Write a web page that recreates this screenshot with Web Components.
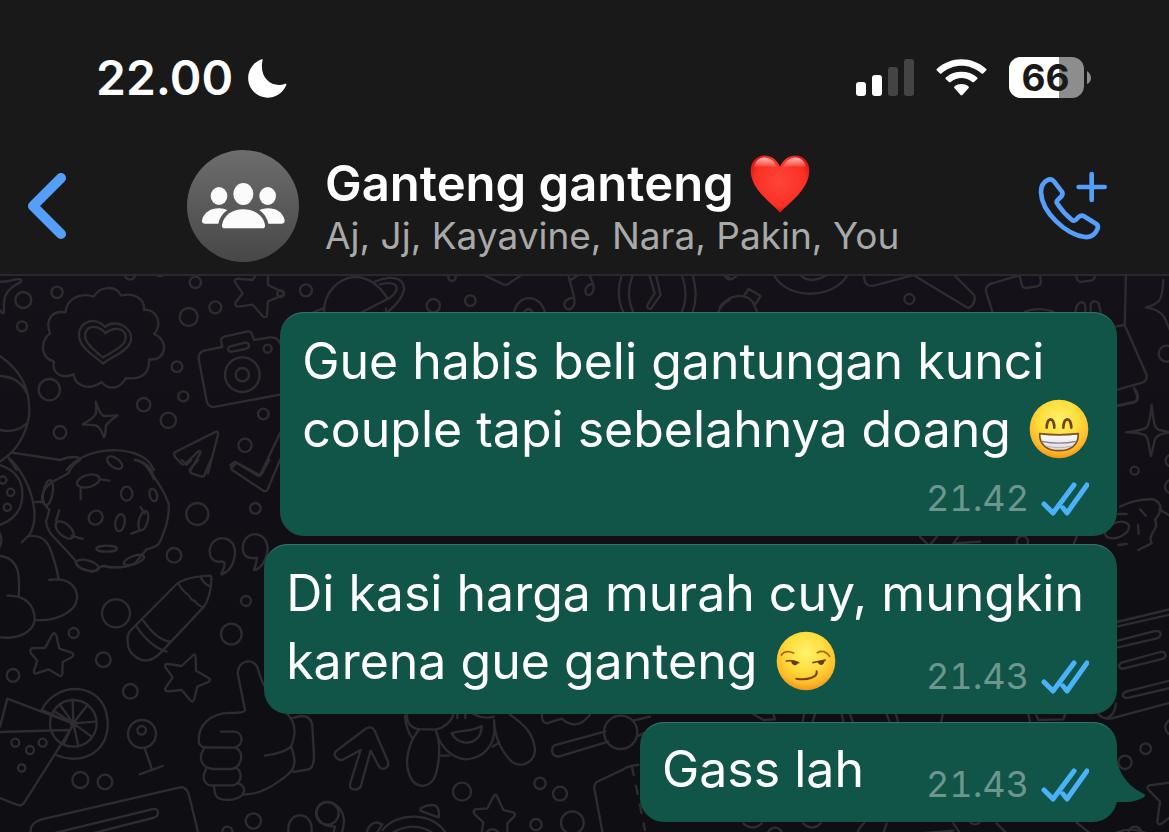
<!DOCTYPE html>
<html lang="id">
<head>
<meta charset="utf-8">
<meta name="viewport" content="width=device-width, initial-scale=1">
<title>Ganteng ganteng</title>
<style>
  html, body { margin: 0; height: 100%; background: #0f0e13; }
  body { font-family: Inter, "Liberation Sans", sans-serif; color: #fff; }
</style>
</head>
<body>
<chat-screen>
  <status-bar slot="top" time="22.00" battery="66"></status-bar>
  <chat-header slot="top">
    <span slot="name">Ganteng ganteng</span>
    <emoji-icon slot="mark" name="heart"></emoji-icon>
    <span slot="members">Aj, Jj, Kayavine, Nara, Pakin, You</span>
  </chat-header>
  <message-bubble layout="stack" time="21.42">Gue habis beli gantungan kunci<br>couple tapi sebelahnya doang <emoji-icon name="grin"></emoji-icon></message-bubble>
  <message-bubble layout="overlay" time="21.43">Di kasi harga murah cuy, mungkin<br>karena gue ganteng <emoji-icon name="smirk"></emoji-icon></message-bubble>
  <message-bubble layout="row" time="21.43" tail>Gass lah</message-bubble>
</chat-screen>

<script>
const define = (name, render) => customElements.define(name, class extends HTMLElement {
  connectedCallback() {
    if (this.shadowRoot) return;
    this.attachShadow({ mode: 'open' }).innerHTML = render(this);
  }
});

define('chat-screen', () => `
<style>
  :host { display: flex; flex-direction: column; height: 100vh; overflow: hidden; }
  header { background: #191919; border-bottom: 2px solid #29282b; flex: none; }
  main { flex: 1; position: relative; overflow: hidden; }
  chat-wallpaper { position: absolute; inset: 0; }
  .thread { position: relative; display: flex; flex-direction: column; align-items: flex-end; gap: 8px; padding: 36px 52px 8px; }
</style>
<header><slot name="top"></slot></header>
<main><chat-wallpaper></chat-wallpaper><div class="thread"><slot></slot></div></main>`);

define('status-bar', el => `
<style>
  :host { display: flex; align-items: center; justify-content: space-between; height: 64px; padding: 46px 78px 40px 96px; }
  div { display: flex; align-items: center; }
  .left { gap: 14px; }
  .right { gap: 22px; }
  time { font-size: 48px; line-height: 64px; font-weight: 600; }
  svg { display: block; }
  .battery { display: grid; align-items: center; }
  .battery > * { grid-area: 1 / 1; }
  .battery b { width: 73px; text-align: center; color: #191919; font-size: 37px; line-height: 42px; font-weight: 700; }
</style>
<div class="left"><time>${el.getAttribute('time')}</time>
  <svg width="40" height="42" viewBox="0 -6 120 126" role="img" aria-label="Focus"><path fill="#fff" d="M47 2C48 1 47 0 44 1A59 59 0 1 0 118 77C119 74 117 73 115 74C83 88 40 65 45 14Q46 6 47 2Z"/></svg>
</div>
<div class="right">
  <svg width="58" height="38" viewBox="0 0 58 38" role="img" aria-label="Signal"><g fill="#fff"><rect y="23" width="10" height="14" rx="3"/><rect x="16" y="16" width="10" height="21" rx="3"/></g><g fill="#444"><rect x="32" y="8" width="10" height="29" rx="3"/><rect x="48" width="10" height="37" rx="3"/></g></svg>
  <svg width="51" height="38" viewBox="0 0 153 114" role="img" aria-label="Wi-Fi"><g fill="#fff"><path d="M2 34Q0 31 3 29C45-9 108-9 150 29Q153 31 151 34L142 43Q139 46 136 43C101 13 52 13 17 43Q14 46 11 43Z"/><path d="M29 60Q27 57 30 55C56 33 97 33 123 55Q126 57 124 60L114 69Q112 71 109 69C89 53 64 53 44 69Q41 71 39 69Z"/><path d="M55 87Q53 85 56 82C67 73 86 73 97 82Q100 85 98 87L80 107Q76 111 73 107Z"/></g></svg>
  <div class="battery">
    <svg width="82" height="42" viewBox="0 0 82 42" aria-hidden="true"><defs><clipPath id="c"><rect width="75" height="41" rx="12"/></clipPath></defs><g clip-path="url(#c)"><rect width="75" height="42" fill="#8d8d8d"/><rect width="50" height="42" fill="#fff"/></g><path d="M78 14Q82 17 82 21T78 27Z" fill="#8d8d8d"/></svg>
    <b>${el.getAttribute('battery')}</b>
  </div>
</div>`);

define('chat-header', () => `
<style>
  :host { display: flex; align-items: center; height: 112px; padding: 0 61px 12px 24px; }
  button { border: 0; padding: 0; background: none; cursor: pointer; display: block; }
  svg { display: block; }
  .back { margin-right: 117px; }
  .avatar { width: 112px; height: 112px; border-radius: 50%; background: linear-gradient(#6d6d6d, #474747); flex: none; }
  .title { flex: 1; min-width: 0; padding-left: 26px; }
  h1 { margin: 0; display: flex; align-items: center; gap: 16px; font-size: 49px; line-height: 60px; font-weight: 600; }
  p { margin: 0; font-size: 37px; line-height: 44px; color: #a9a9a9; white-space: nowrap; }
</style>
<button class="back" aria-label="Back"><svg width="46" height="72" viewBox="0 0 46 72"><path d="M37 8L9 36L37 64" fill="none" stroke="#559ffb" stroke-width="10" stroke-linecap="round" stroke-linejoin="round"/></svg></button>
<div class="avatar"><svg width="112" height="112" viewBox="561 29 336 336" role="img" aria-label="Group"><g fill="#fbfbfb"><ellipse cx="730" cy="161" rx="30" ry="33"/><ellipse cx="657" cy="167" rx="25" ry="27"/><ellipse cx="803" cy="167" rx="25" ry="27"/><path d="M674 264Q665 264 666 254C671 224 699 207 730 207S790 224 795 254Q796 264 787 264Z"/><path d="M614 250Q605 250 606 240C612 214 636 203 658 204Q671 204 682 209Q660 225 655 250Z"/><path d="M846 250Q855 250 854 240C849 214 825 203 803 204Q790 204 778 209Q800 225 805 250Z"/></g></svg></div>
<div class="title"><h1><slot name="name"></slot><slot name="mark"></slot></h1><p><slot name="members"></slot></p></div>
<button aria-label="Start call"><svg width="70" height="70" viewBox="895 93 210 210"><g fill="none" stroke="#559ffb" stroke-width="14" stroke-linecap="round" stroke-linejoin="round"><path d="M1056 102V180M1017 141H1095"/><path d="M943 124L966 154Q971 161 966 168L953 181Q949 186 953 191Q970 217 996 239Q1003 245 1009 239L1018 230Q1025 224 1033 229L1069 251Q1077 257 1074 266Q1062 294 1036 291C980 285 906 217 904 157Q904 130 922 121Q935 114 943 124Z"/></g></svg></button>`);

define('message-bubble', el => `
<style>
  :host { display: grid; row-gap: 6px; position: relative; box-sizing: border-box; max-width: 100%; padding: 15px 28px 14px 22px; border-radius: 24px; background: #115448; box-shadow: inset 0 2px 1px -1px #38766b; }
  .text { font-size: 50px; line-height: 68px; margin-bottom: 5px; }
  .meta { display: flex; align-items: center; justify-content: flex-end; gap: 12px; align-self: end; }
  time { font-size: 36px; line-height: 48px; color: #6c968e; font-variant-numeric: tabular-nums; }
  :host([layout="overlay"]) .text, :host([layout="overlay"]) .meta { grid-area: 1 / 1; }
  :host([layout="overlay"]) .text { padding-right: 5px; }
  :host([layout="row"]) { grid-auto-flow: column; column-gap: 62px; padding-top: 13px; }
  .tail { position: absolute; right: -29px; bottom: 12px; }
</style>
${el.hasAttribute('tail') ? '<svg class="tail" width="45" height="50" viewBox="0 0 45 50" aria-hidden="true"><path fill="#115448" d="M0 0H16C19 17 30 28 43 34Q45 35 43 37C33 43 25 42 16 42L0 50Z"/></svg>' : ''}
<div class="text"><slot></slot></div>
<div class="meta"><time>${el.getAttribute('time')}</time>
  <svg width="48" height="36" viewBox="1041 480 48 36" role="img" aria-label="Read"><path d="M1044 504L1053 513L1074 485M1063 508L1067 513L1087 485" fill="none" stroke="#4bb1f8" stroke-width="5" stroke-linecap="round" stroke-linejoin="round"/></svg>
</div>`);

const face = `<radialGradient id="f" cx=".5" cy=".35" r=".68"><stop offset="0" stop-color="#fff36a"/><stop offset=".5" stop-color="#ffdc3c"/><stop offset=".8" stop-color="#fdb92a"/><stop offset="1" stop-color="#ee8b14"/></radialGradient>`;
const emoji = {
  heart: ['❤️', `<defs><radialGradient id="h" cx=".5" cy=".45" r=".62"><stop offset="0" stop-color="#ff4438"/><stop offset=".7" stop-color="#fb3024"/><stop offset="1" stop-color="#c80a06"/></radialGradient><linearGradient id="g" x2="0" y2="1"><stop stop-color="#fff" stop-opacity=".7"/><stop offset="1" stop-color="#fff" stop-opacity="0"/></linearGradient></defs><path fill="url(#h)" d="M90 176C72 153 2 108 2 50C2-3 68-14 90 38C112-14 178-3 178 50C178 108 108 153 90 176Z"/><path fill="url(#g)" d="M12 42C16 2 66-2 82 42Q47 32 12 42ZM98 42C114-2 164 2 168 42Q133 32 98 42Z"/>`],
  grin: ['😁', `<defs>${face}<linearGradient id="t" x2="0" y2="1"><stop stop-color="#fff"/><stop offset="1" stop-color="#d9d9df"/></linearGradient></defs><circle cx="90" cy="90" r="88" fill="url(#f)"/><g fill="none" stroke="#75400d" stroke-width="8" stroke-linecap="round"><path d="M53 86Q54 62 65 61Q75 62 76 86M103 86Q104 62 115 61Q126 62 127 86"/></g><path d="M32 104Q90 111 148 104C149 137 126 155 90 155S31 137 32 104Z" fill="url(#t)" stroke="#81501d" stroke-width="5" stroke-linejoin="round"/><path d="M38 127Q90 138 142 127" fill="none" stroke="#8d7f86" stroke-width="4"/><path d="M50 141Q90 151 130 141" fill="none" stroke="#b9b0b6" stroke-width="3"/>`],
  smirk: ['😏', `<defs>${face}</defs><circle cx="90" cy="90" r="88" fill="url(#f)"/><g fill="none" stroke="#75420d" stroke-width="5" stroke-linecap="round"><path d="M16 72Q27 55 53 66M124 65Q145 54 161 76" stroke="#a8640f"/><path d="M31 90Q48 86 68 95M111 95Q130 91 148 87"/><path d="M61 143C98 149 125 137 122 121" stroke-width="6"/></g><path d="M45 91Q56 87 66 96Q64 103 56 103Q48 102 45 91ZM125 93Q137 88 146 90Q144 101 136 102Q128 103 125 93Z" fill="#633a14"/>`]
};
define('emoji-icon', el => {
  const [label, art] = emoji[el.getAttribute('name')];
  return `<style>:host { display: inline-block; width: 60px; height: 60px; vertical-align: -12px; margin-left: 4px; } :host([name="heart"]) { margin: 0; } svg { display: block; width: 100%; height: 100%; }</style><svg viewBox="0 0 180 180" role="img" aria-label="${label}">${art}</svg>`;
});

const dots = list => list.map(([x, y, r]) => `<circle cx="${x}" cy="${y}" r="${r}"/>`).join('');
define('chat-wallpaper', () => `
<style>:host { display: block; background: linear-gradient(#141118, #0f0e13 70%); } svg { display: block; width: 100%; height: 100%; }</style>
<svg viewBox="0 276 1169 556" preserveAspectRatio="xMinYMin slice" aria-hidden="true">
<g fill="none" stroke="#2e2c31" stroke-width="7" stroke-linecap="round" stroke-linejoin="round">
<g transform="translate(0 270) scale(.33333)">
  ${dots([[70,90,24],[171,67,17],[66,169,15],[566,141,27],[646,112,18],[586,37,17],[531,290,16],[148,359,32],[431,404,20],[550,379,15],[505,451,23],[180,487,19],[790,432,16],[735,526,20],[803,236,12],[727,314,52],[727,314,20],[390,14,15]])}
  <path d="M-10 34C30 40 40 24 62 28Q66 31 60 38C10 60 10 90 12 126Q8 135 0 120"/>
  <path d="M465 12Q480 26 495 12M281 80C300 46 350 46 363 77C405 65 435 90 432 120C468 115 490 160 462 192C508 210 500 275 447 268C450 310 425 330 378 324C360 358 325 362 305 336C270 362 225 350 221 313C180 330 155 305 162 275C115 260 125 210 150 190C135 150 155 120 196 127C200 90 235 65 281 80Z"/>
  <path d="M315 171C275 128 218 170 243 218C252 242 285 258 309 281C335 260 382 245 392 215C402 170 345 145 315 171Z"/><path d="M316 190C285 152 242 175 259 212Q268 230 309 262Q360 235 373 218C391 175 343 165 316 190Z"/>
  <path d="M770 12L758 30L712 26Q701 28 706 38L728 70L706 98Q704 110 716 110L758 104L788 138Q797 146 801 136L804 94L848 76Q856 71 848 66L804 45L804 12"/>
  <path d="M846 240Q842 200 810 202L762 210L756 192Q752 182 740 185L673 200Q660 204 664 216L667 231L612 242Q592 248 597 272L620 392Q625 414 647 410L840 374M692 229L734 218Q746 217 747 226Q748 234 737 237L696 245Q684 246 684 237Q685 231 692 229Z"/>
  <path d="M0 258C60 300 88 350 88 420C88 470 60 530 20 560C0 575-10 582-20 590M0 318Q55 320 78 365M0 480Q50 490 78 462M36 548L182 570Q205 558 235 562M25 562L50 600M200 600C250 530 400 520 450 580L462 600"/>
  <path d="M287 395Q300 435 312 438L353 436Q325 455 317 468Q318 490 312 502Q300 470 288 466Q270 464 248 463Q280 445 287 432Q290 420 287 395Z"/>
  <path d="M526 546L648 485Q656 484 654 494L624 610M526 546Q518 550 526 562L545 582Q552 586 560 578L594 545Q602 540 602 548L572 600"/><path d="M692 585L705 575L780 616L840 490M692 585L696 600"/>
</g>
<g transform="translate(0 460) scale(.33333)">
  ${dots([[592,162,33],[766,145,16],[522,286,22],[348,460,42],[738,423,15],[694,522,31],[221,519,15],[8,60,11],[32,97,11],[22,142,11]])}
  <path d="M0 15C45 30 68 60 67 105C66 150 40 180 0 194M34 0C90 60 125 165 88 225L65 247M88 228C145 225 150 265 162 300Q172 330 176 360M148 360C210 350 233 385 231 415C228 455 170 485 106 480M0 288C60 295 60 350 56 408M22 407C80 405 105 440 104 480C98 520 50 538 0 532M106 126L132 126M0 220Q8 240 0 260"/>
  <path d="M240 0Q215 15 205 40L158 65Q120 90 127 125L148 150L138 185Q142 215 165 235L225 300Q230 325 260 330C290 345 290 318 310 318Q360 330 405 310L440 268Q475 260 480 245Q510 180 506 130Q490 90 462 50Q450 10 410 0M462 58Q440 5 405 0"/>
  <ellipse cx="144" cy="98" rx="14" ry="38" transform="rotate(10 144 98)"/><ellipse cx="265" cy="63" rx="35" ry="18" transform="rotate(-15 265 63)"/><ellipse cx="344" cy="8" rx="26" ry="14" transform="rotate(35 344 8)"/><ellipse cx="380" cy="101" rx="17" ry="21"/><ellipse cx="460" cy="105" rx="11" ry="19" transform="rotate(-15 460 105)"/><ellipse cx="287" cy="173" rx="20" ry="22" transform="rotate(45 287 173)"/><ellipse cx="360" cy="188" rx="14" ry="26" transform="rotate(10 360 188)"/><ellipse cx="430" cy="182" rx="13" ry="30" transform="rotate(15 430 182)"/><ellipse cx="194" cy="210" rx="33" ry="18" transform="rotate(42 194 210)"/><ellipse cx="320" cy="266" rx="31" ry="9"/><ellipse cx="262" cy="316" rx="35" ry="15" transform="rotate(15 262 316)"/><ellipse cx="402" cy="300" rx="32" ry="12" transform="rotate(-20 402 300)"/>
  <path d="M300 58L328 62M242 82V118M178 150L168 182M215 228L248 237M422 142L434 160M418 212L394 221"/>
  <path d="M545 0L560 14L574 0M594 0L570 28Q568 35 575 40L605 50Q612 50 615 42L632 0M710 8L772 46Q780 50 785 42L808 0M710 8L694 24L697 30L790 92Q798 97 803 88L840 0"/>
  <path d="M665 304C640 310 625 290 630 265C640 220 708 225 705 280Q700 330 665 343C660 340 675 330 674 308ZM770 293C735 300 726 280 729 255C740 205 805 215 803 270Q795 320 763 331C758 328 772 318 770 293Z"/>
  <path d="M383 545Q380 520 395 508L530 372Q560 350 630 347Q636 348 634 360Q632 410 612 440L485 575Q440 625 395 580Q383 565 383 545ZM538 375Q550 395 562 402Q568 405 574 418L586 424Q592 436 610 442M602 350Q610 372 632 380M410 500Q450 560 500 575M430 482Q470 540 512 546"/>
</g>
<g transform="translate(0 640) scale(.33333)">
  ${dots([[39,106,19],[310,59,22],[391,154,22],[426,282,42],[425,271,13],[241,420,24],[315,426,22],[46,308,12],[90,330,12],[128,308,12],[65,384,11],[760,543,23],[682,575,15],[220,250,70],[220,250,8],[982,520,34]])}
  <path d="M156-15Q165-28 170-10L178 26L215 38Q225 44 215 52L188 66L187 102Q184 112 176 106L145 88L110 100Q100 103 102 92L112 62L92 38Q88 25 100 24L135 24Z"/>
  <path d="M580 45Q586 40 587 52L588 92L626 114Q634 120 625 126L592 140L582 180Q577 188 570 180L545 150L502 154Q492 152 497 143L518 112L495 80Q494 70 505 72L545 78Z"/>
  <path d="M125 210C170 120 310 125 322 235C335 330 250 380 168 345M22 176L222 252L74 486Q66 500 50 494L0 474M22 176L0 260M0 276L205 270M125 210L205 245M220 250L218 182M220 250L262 195M220 250L288 245M220 250L275 290M220 250L235 318M220 250L192 310M220 250L165 215M220 250L180 195"/>
  <path d="M434 325L455 385M419 403L488 378"/>
  <path d="M92 576Q90 548 125 538L540 442Q558 440 566 462L594 576M160 580L455 508Q474 503 474 520Q473 530 458 534L270 582"/>
  <path d="M735 210L714 105C708 60 765 48 775 90C785 140 830 195 855 215C895 250 885 290 873 320C900 385 870 400 835 425Q780 465 730 463M735 210Q735 218 700 219C630 215 590 260 597 310Q605 325 625 322L705 323C735 310 728 275 700 275L663 275M612 325C590 360 610 385 640 387H695C730 380 732 330 705 323M618 388C600 420 620 440 645 436H700C730 425 725 395 710 385M643 438C640 480 665 483 700 478C740 470 740 440 715 430M873 320Q850 340 795 347M872 235L905 228Q935 228 937 260L942 345Q942 385 925 388L880 396M865 575C860 510 940 510 935 575"/>
</g>
<g transform="translate(310 690) scale(.33333)">
  ${dots([[456,305,27],[690,280,17],[750,311,21],[678,404,17],[787,398,34],[932,127,50]])}
  <path d="M178 112Q190 112 195 124L234 215Q238 230 224 236Q212 238 207 230L182 182L152 290Q146 300 132 299Q118 296 120 282L152 180L98 209Q85 212 77 201Q70 190 80 182L162 120Q170 112 178 112Z"/>
  <path d="M290 72C290 95 300 115 330 118H378C400 115 425 95 430 72M285 78Q288 120 308 146M326 120C295 160 285 210 295 245C310 300 360 300 377 255C392 200 390 150 377 120M380 130C390 170 430 208 470 208C520 205 560 165 552 100M390 197H418M548 170L568 157M425 130C450 120 490 125 515 108C515 140 495 158 467 158Q437 155 425 130ZM552 90C555 150 580 190 605 215C640 240 680 210 674 170C665 120 635 100 600 74M490 72Q520 88 552 80M442 72V84M466 72V84M696 72Q694 98 710 100L755 86Q800 125 840 74"/>
  <path d="M886 124L733 166Q722 175 728 190Q735 202 748 199L895 155M970 92L1020 80M980 140L1000 130M985 225Q960 225 940 238L860 276Q850 285 854 300L878 430"/><path d="M966 230L1005 420" stroke-dasharray="26 32"/><path d="M560 317L580 360L612 368Q618 375 610 382L592 400V430M560 317Q555 310 550 320L532 355L495 358Q487 366 495 374L520 397L515 430M530 426Q547 410 565 426M20 370C20 320 95 325 102 390Q102 410 95 430M20 370Q25 408 75 410L70 430M332 355Q350 343 375 346Q390 355 386 382Q350 370 332 362ZM170 430Q175 400 200 397L217 403L200 430M218 420C260 365 370 365 408 430M245 430Q310 390 370 430"/>
</g>
<g transform="translate(900 390) scale(.33333)">
  ${dots([[704,242,12],[815,212,18],[815,290,20],[367,455,17]])}
  <path d="M652 48L700 38Q718 34 712 10L707 0M755 44C762 100 762 115 778 120L815 127C770 130 763 145 762 160L753 198C745 170 748 145 735 135Q710 125 678 127C720 120 735 120 742 110Q750 95 755 44Z"/><path d="M660 350Q710 325 760 328Q790 340 778 370L765 390C780 420 740 430 755 460L715 480M778 358L815 380M720 358L738 378M714 405L716 432M655 372L680 372M655 465L680 462"/><ellipse cx="651" cy="420" rx="38" ry="22" transform="rotate(-22 651 420)"/><path d="M520 465L530 440M60 440L85 465M110 440L90 465M175 440L160 460L240 455"/>
</g>
<g transform="translate(740 610) scale(.33333)">
  ${dots([[1217,416,16],[1155,457,20],[1300,352,24],[1185,670,20],[705,625,18],[105,675,22]])}
  <path d="M1130 36L1290 -2M1130 50L1290 14M1134 92L1240 64Q1260 60 1262 72Q1262 82 1248 86L1134 112M1145 158L1260 126Q1276 124 1277 136Q1276 146 1262 148L1150 176Q1136 176 1137 165ZM1290 212L1160 244Q1145 250 1150 260Q1155 266 1170 262L1290 234M1075 312Q1090 330 1115 325L1290 278M1128 280Q1125 315 1100 325M40 312L70 330L105 328L100 312M192 312L188 335M225 312L218 335M305 312L310 335M330 312L338 335M440 312L448 335M468 312L474 335M608 312L604 335M865 312L870 335M888 312L895 330L970 328L976 312"/>
  <path d="M1290 518L1228 526Q1218 530 1226 540L1260 575L1252 635Q1254 648 1266 640L1290 622M352 670Q358 650 372 640M430 670L440 640M10 640Q38 665 65 640M190 640Q215 665 242 640M540 670L640 662M640 640L660 670M800 670L770 640M1010 638L1050 670M1130 668Q1170 650 1215 668"/>
</g>
<g transform="translate(280 265) scale(.33333)">
  ${dots([[78,76,18],[460,122,20],[571,107,16],[516,37,11],[2,86,10]])}
  <path d="M132 145C130 80 180 35 230 36Q285 40 322 100M285 50C330 30 375 35 372 75Q365 105 325 140M245 142L330 98C360 75 360 45 300 58M100 142L130 130M318 145V130M612 30L670 58Q684 62 692 52L725 30M702 142C715 85 780 85 795 142M732 142Q745 122 758 142M865 30L882 96C890 130 865 142 855 126C848 112 860 100 880 98M868 48L894 30M928 30L940 58C945 90 920 100 916 80Q915 62 938 56M1025 30Q1005 90 1030 142M1058 30Q1035 90 1060 142M1205 30Q1228 90 1205 142M1238 30Q1256 90 1238 142M1108 30L1124 85L1102 120Q1100 132 1112 132L1142 90L1128 30M1335 30L1350 40M1315 142Q1325 115 1350 105"/>
</g>
<g transform="translate(720 265) scale(.33333)">
  ${dots([[568,102,15],[1340,266,24]])}
  <path d="M240 30Q271 60 320 30M12 30Q28 56 52 30M0 125C30 85 75 85 98 110L112 142M70 95L86 72L122 93L104 120M162 30C200 105 340 105 382 30M432 30Q432 68 462 62L580 30L745 130Q770 115 762 90L702 30M818 142L798 80Q795 60 820 54L895 32M898 30L906 62Q910 70 920 69L950 64Q965 60 962 45L960 30M1068 30L1072 45Q1076 52 1090 50L1116 46Q1126 42 1124 30M915 140Q955 125 1000 140M1066 142C1070 105 1095 105 1096 125V142M1112 142V118Q1120 100 1136 115L1142 142M1218 30L1214 180L1190 184M1214 180L1280 330Q1282 348 1265 354L1192 374M1240 362L1252 395Q1252 408 1240 411L1192 422M1330 45C1328 110 1315 118 1278 127Q1315 132 1332 155L1350 195"/>
</g>
</g></svg>`);
</script>
</body>
</html>
